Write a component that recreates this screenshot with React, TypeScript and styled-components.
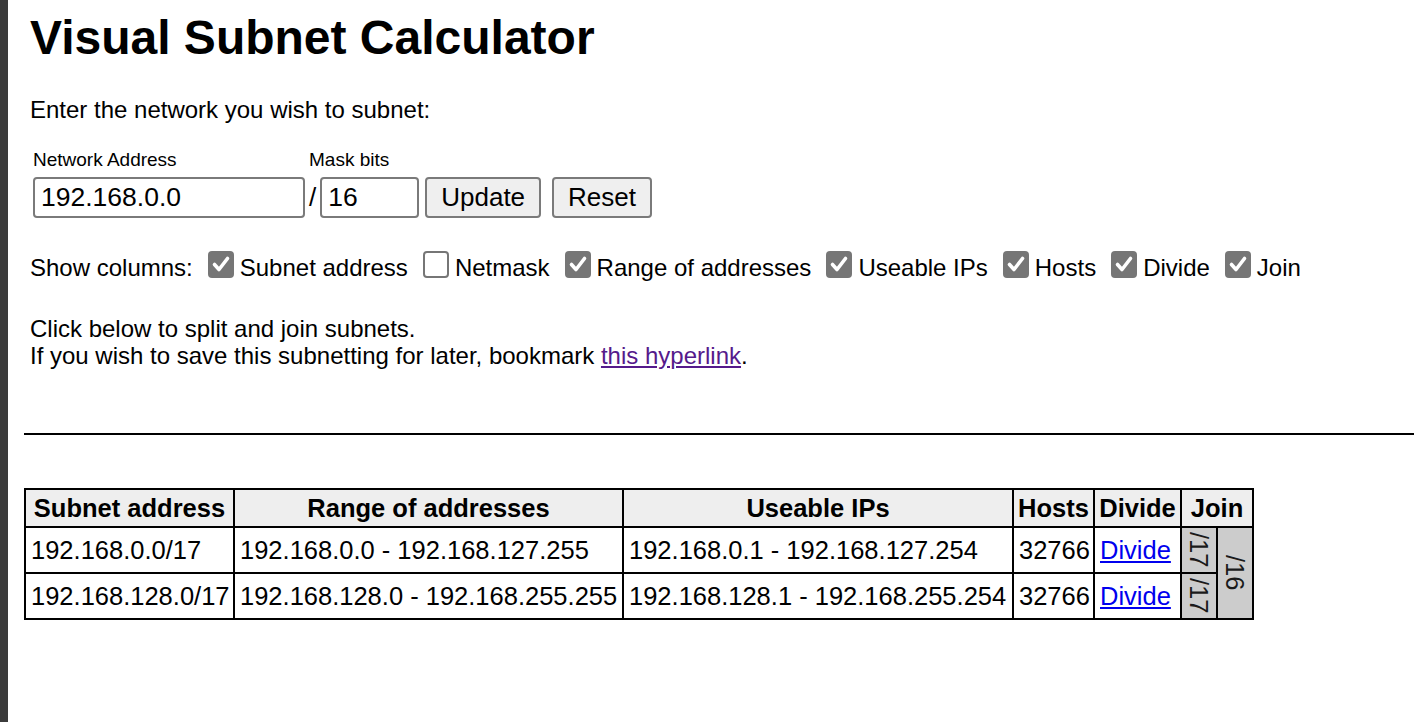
import * as React from 'react'
import styled, { createGlobalStyle } from 'styled-components'

const GlobalStyle = createGlobalStyle`
  html, body {
    margin: 0;
    padding: 0;
    background: #fff;
    overflow: hidden;
  }
  body {
    font-family: "Liberation Sans", Arial, sans-serif;
    color: #000;
  }
`

const Page = styled.div`
  display: flex;
  min-height: 100vh;
`

const Strip = styled.div`
  background-color: #3b3b3b;
  flex: 0 0 8px;
`

const Main = styled.main`
  flex: 1;
  min-width: 0;
  padding-left: 16px;
`

const Intro = styled.section`
  padding-left: 6px;
`

const Title = styled.h1`
  font-size: 48px;
  font-weight: bold;
  line-height: 56px;
  margin: 10px 0 0;
`

const Text = styled.p<{ $top: number }>`
  font-size: 24px;
  line-height: 27px;
  margin: ${p => p.$top}px 0 0;
`

const NetworkForm = styled.form`
  display: flex;
  margin: 26px 0 0 3px;
`

const Field = styled.div<{ $gap?: number }>`
  display: flex;
  flex-direction: column;
  margin-left: ${p => p.$gap || 0}px;
`

const FieldLabel = styled.label`
  font-size: 19px;
  line-height: 22px;
  margin-bottom: 6px;
`

const Controls = styled.div`
  align-items: center;
  display: flex;
`

const Slash = styled.span`
  font-size: 26px;
  margin-right: 4px;
`

const TextInput = styled.input<{ $width: number }>`
  border: 2px solid #7a7a7a;
  border-radius: 4px;
  box-sizing: border-box;
  font-family: "Liberation Sans", Arial, sans-serif;
  font-size: 26.5px;
  height: 41px;
  padding: 0 5px 0 6px;
  width: ${p => p.$width}px;
`

const Button = styled.button<{ $gap: number }>`
  background-color: #efefef;
  border: 2px solid #7a7a7a;
  border-radius: 4px;
  box-sizing: border-box;
  color: #000;
  font-family: "Liberation Sans", Arial, sans-serif;
  font-size: 26px;
  height: 41px;
  margin-left: ${p => p.$gap}px;
  padding: 0 14px;
`

const ColumnsRow = styled.div`
  display: flex;
  font-size: 24px;
  height: 28px;
  line-height: 28px;
  margin-top: 36px;
  white-space: nowrap;
`

const Option = styled.label`
  display: flex;
  margin-left: 15px;
`

const Box = styled.span<{ $checked: boolean }>`
  background-color: ${p => (p.$checked ? '#767676' : '#fff')};
  border: ${p => (p.$checked ? 'none' : '2px solid #767676')};
  border-radius: 4px;
  box-sizing: border-box;
  display: block;
  height: 27px;
  margin: -3px 6px 0 0;
  width: 26px;

  svg {
    display: block;
  }
`

const Link = styled.a`
  color: #551a8b;
  text-decoration: underline;
`

const Rule = styled.hr`
  border: none;
  border-top: 2px solid #000;
  margin: 64px 0 0;
`

const CalcTable = styled.table`
  border-collapse: collapse;
  font-size: 25.5px;
  margin-top: 53px;
  table-layout: fixed;
  width: 1230px;
`

const HeadCell = styled.th`
  background-color: #eeeeee;
  border: 2px solid #000;
  font-weight: bold;
  line-height: 28px;
  padding: 4px 3px;
  text-align: center;
  white-space: nowrap;
`

const Cell = styled.td`
  border: 2px solid #000;
  line-height: 28px;
  padding: 8px 4px 8px 5px;
  white-space: nowrap;
`

const JoinCell = styled.td`
  background-color: #cccccc;
  border: 2px solid #000;
  line-height: 0;
  padding: 0;
  text-align: center;
`

const Vertical = styled.span`
  color: #1a1a1a;
  display: inline-block;
  line-height: 28px;
  vertical-align: middle;
  writing-mode: vertical-rl;
`

const DivideLink = styled.a`
  color: #0000ee;
  text-decoration: underline;
`

const columns = [
  { label: 'Subnet address', on: true },
  { label: 'Netmask', on: false },
  { label: 'Range of addresses', on: true },
  { label: 'Useable IPs', on: true },
  { label: 'Hosts', on: true },
  { label: 'Divide', on: true },
  { label: 'Join', on: true },
]

const subnets = [
  { net: '192.168.0.0/17', range: '192.168.0.0 - 192.168.127.255', usable: '192.168.0.1 - 192.168.127.254', hosts: 32766 },
  { net: '192.168.128.0/17', range: '192.168.128.0 - 192.168.255.255', usable: '192.168.128.1 - 192.168.255.254', hosts: 32766 },
]

const widths = [209, 389, 390, 81, 87, 36, 36]

const Check = ({ on }: { on: boolean }) => (
  <Box $checked={on}>
    {on && (
      <svg width="26" height="27" viewBox="0 0 26 27">
        <path d="M6.5 13.5 L11 18.5 L19.5 7.5" fill="none" stroke="#fff" strokeWidth="3.6" strokeLinecap="round" strokeLinejoin="round" />
      </svg>
    )}
  </Box>
)

export default function App() {
  return <Page>
    <GlobalStyle />
    <Strip />
    <Main>
      <Intro>
        <Title>Visual Subnet Calculator</Title>
        <Text $top={30}>Enter the network you wish to subnet:</Text>
        <NetworkForm onSubmit={e => e.preventDefault()}>
          <Field>
            <FieldLabel>Network Address</FieldLabel>
            <TextInput $width={272} defaultValue="192.168.0.0" />
          </Field>
          <Field $gap={4}>
            <FieldLabel>Mask bits</FieldLabel>
            <Controls>
              <Slash>/</Slash>
              <TextInput $width={99} defaultValue="16" />
              <Button $gap={6} type="button">Update</Button>
              <Button $gap={11} type="button">Reset</Button>
            </Controls>
          </Field>
        </NetworkForm>
        <ColumnsRow>
          <span>Show columns:</span>
          {columns.map(c => (
            <Option key={c.label}>
              <Check on={c.on} />
              <span>{c.label}</span>
            </Option>
          ))}
        </ColumnsRow>
        <Text $top={33}>
          Click below to split and join subnets.<br />
          If you wish to save this subnetting for later, bookmark <Link href="#">this hyperlink</Link>.
        </Text>
      </Intro>
      <Rule />
      <CalcTable>
        <colgroup>
          {widths.map((w, i) => <col key={i} style={{ width: w }} />)}
        </colgroup>
        <thead>
          <tr>
            <HeadCell>Subnet address</HeadCell>
            <HeadCell>Range of addresses</HeadCell>
            <HeadCell>Useable IPs</HeadCell>
            <HeadCell>Hosts</HeadCell>
            <HeadCell>Divide</HeadCell>
            <HeadCell colSpan={2}>Join</HeadCell>
          </tr>
        </thead>
        <tbody>
          {subnets.map((s, i) => (
            <tr key={s.net}>
              <Cell>{s.net}</Cell>
              <Cell>{s.range}</Cell>
              <Cell>{s.usable}</Cell>
              <Cell>{s.hosts}</Cell>
              <Cell><DivideLink href="#">Divide</DivideLink></Cell>
              <JoinCell><Vertical>/17</Vertical></JoinCell>
              {i === 0 && <JoinCell rowSpan={2}><Vertical>/16</Vertical></JoinCell>}
            </tr>
          ))}
        </tbody>
      </CalcTable>
    </Main>
  </Page>
}
